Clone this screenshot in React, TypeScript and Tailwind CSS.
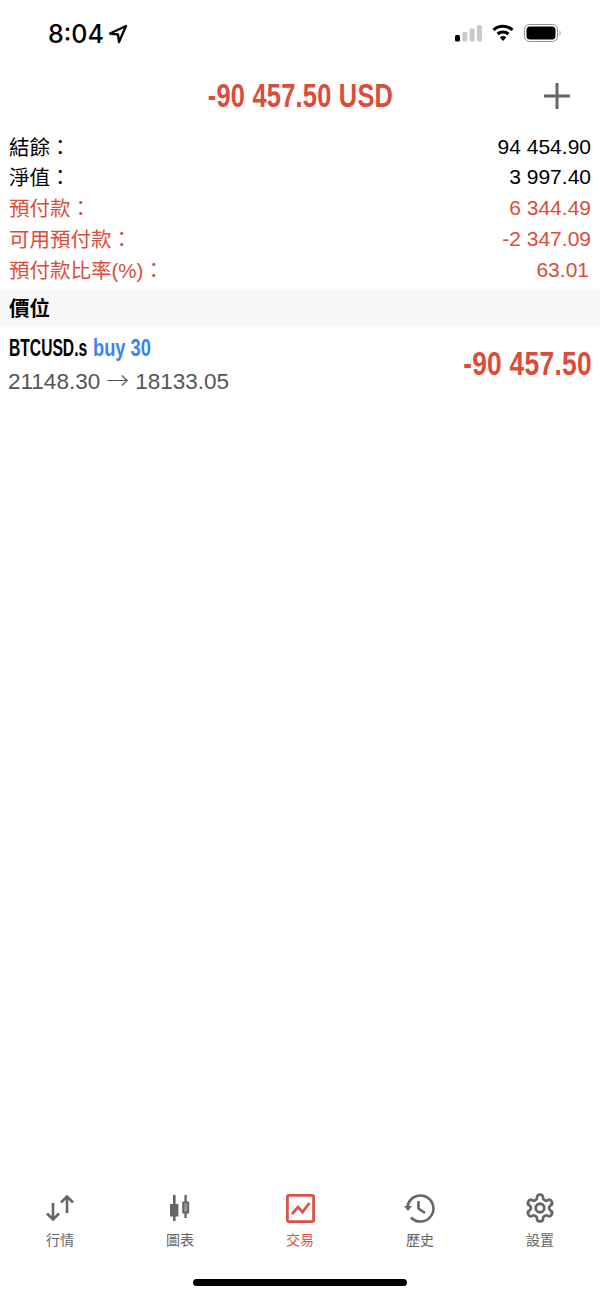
const sans = 'font-["Liberation_Sans","Noto_Sans_CJK_TC",sans-serif]';

const rows = [
  { label: '結餘：', value: '94 454.90', red: false },
  { label: '淨值：', value: '3 997.40', red: false },
  { label: '預付款：', value: '6 344.49', red: true },
  { label: '可用預付款：', value: '-2 347.09', red: true },
  { label: '預付款比率(%)：', value: '63.01', red: true },
];

function StatusBar() {
  return (
    <div className="h-[66px] flex items-start justify-between pt-[19px] pl-[48px] pr-[38px]">
      <div className="flex items-center gap-[4px]">
        <span className='font-["Inter",sans-serif] text-[25px] leading-[30px] font-medium text-black'>8:04</span>
        <svg width="20" height="20" viewBox="0 0 20 20" fill="none" stroke="black" strokeWidth="2.3" strokeLinejoin="round">
          <path d="M18 2 L2 9.5 L10 10.5 L11 18 Z" />
        </svg>
      </div>
      <div className="flex items-center gap-[10px] pt-[5px]">
        <svg width="27" height="18" viewBox="0 0 27 18">
          <rect x="0" y="11" width="5" height="6.5" rx="1.5" fill="black" />
          <rect x="7.3" y="8" width="5" height="9.5" rx="1.5" fill="#c9c9c9" />
          <rect x="14.6" y="4.5" width="5" height="13" rx="1.5" fill="#c9c9c9" />
          <rect x="21.9" y="1" width="5" height="16.5" rx="1.5" fill="#c9c9c9" />
        </svg>
        <svg width="22" height="18" viewBox="0 0 22 18" fill="none" stroke="black" strokeWidth="3">
          <path d="M1.5 6 A14 14 0 0 1 20.5 6" />
          <path d="M5.5 10 A8.5 8.5 0 0 1 16.5 10" />
          <path d="M11 17 L7.8 13.4 A5 5 0 0 1 14.2 13.4 Z" fill="black" stroke="none" />
        </svg>
        <svg width="38" height="18" viewBox="0 0 38 18">
          <rect x="0.5" y="0.5" width="33" height="17" rx="5" fill="none" stroke="#8e8e8e" />
          <rect x="2.5" y="2.5" width="29" height="13" rx="3.5" fill="black" />
          <path d="M35.5 6.5 C37 7 37 11 35.5 11.5 Z" fill="#9a9a9a" />
        </svg>
      </div>
    </div>
  );
}

function TabItem({ label, active, children }: { label: string; active?: boolean; children: React.ReactNode }) {
  return (
    <div className={`flex flex-col items-center ${active ? 'text-[#d9534a]' : 'text-[#666666]'}`}>
      <div className="h-[32px] flex items-center justify-center">{children}</div>
      <span className="text-[14px] leading-[16px] mt-[8px]">{label}</span>
    </div>
  );
}

export default function App() {
  return (
    <div className={`relative w-[600px] h-[1298px] bg-white flex flex-col overflow-hidden ${sans}`}>
      <StatusBar />

      <div className="relative h-[60px] flex items-center justify-center">
        <span className="text-[33px] leading-[40px] font-bold tracking-[0.3px] text-[#dc4c3a] inline-block scale-x-[0.77] whitespace-nowrap">-90 457.50 USD</span>
        <svg className="absolute left-[544px] top-[17px]" width="26" height="26" viewBox="0 0 26 26" stroke="#666666" strokeWidth="3">
          <path d="M13 0 V26 M0 13 H26" />
        </svg>
      </div>

      <div className="flex flex-col pl-[9px] pr-[9px] pt-[5px]">
        {rows.map((row, i) => (
          <div
            key={row.label}
            className={`h-[30.75px] flex items-center justify-between text-[21px] ${row.red ? 'text-[#dc4c3a]' : 'text-black'}`}
          >
            <span className="text-[20.5px] mt-[3px]">{row.label}</span>
            <span className={i === 4 ? 'pr-[2px]' : ''}>{row.value}</span>
          </div>
        ))}
      </div>

      <div className="h-[36px] mt-[5.25px] bg-[#f7f7f7] flex items-center pl-[9px] pt-[2px] text-[20.5px] font-bold text-black">價位</div>

      <div className="h-[74px] flex items-center justify-between pl-[8px] pr-[8px]">
        <div className="flex flex-col">
          <div className="h-[34px] pl-[1px] pt-[1px] flex items-center font-bold whitespace-nowrap">
            <span className="w-[84px] text-[23px] text-black origin-left scale-x-[0.68]">BTCUSD.s</span>
            <span className="text-[24px] text-[#3b82f6] origin-left scale-x-[0.76]">buy 30</span>
          </div>
          <div className="text-[22.5px] leading-[28px] text-[#555555] whitespace-nowrap">
            21148.30 <span className='font-["Noto_Sans_CJK_TC"] font-light'>→</span> 18133.05
          </div>
        </div>
        <span className="mt-[2px] text-[33px] font-bold tracking-[0.3px] text-[#dc4c3a] origin-right scale-x-[0.8] whitespace-nowrap">-90 457.50</span>
      </div>

      <div className="flex-1" />

      <div className="grid grid-cols-5 pb-[50px]">
        <TabItem label="行情">
          <svg width="28" height="26" viewBox="0 0 28 26" fill="none" stroke="currentColor" strokeWidth="2.6">
            <path d="M7 8 V24.5 M1 18.5 L7 24.5 L13 18.5" />
            <path d="M21 18 V1.5 M15 7.5 L21 1.5 L27 7.5" />
          </svg>
        </TabItem>
        <TabItem label="圖表">
          <svg width="20" height="26" viewBox="0 0 20 26" fill="currentColor">
            <rect x="3" y="0" width="2.6" height="26" />
            <rect x="0" y="9" width="8.4" height="12.5" />
            <rect x="14.4" y="0" width="2.4" height="23" />
            <rect x="13.2" y="7.5" width="5" height="10" fill="#999999" stroke="currentColor" strokeWidth="2" />
          </svg>
        </TabItem>
        <TabItem active label="交易">
          <svg width="29" height="29" viewBox="0 0 29 29" fill="none" stroke="currentColor" strokeWidth="2.8">
            <rect x="1.4" y="1.4" width="26.2" height="26.2" rx="1.5" />
            <path d="M6 20 L12 13 L16.5 18 L23.5 9" />
          </svg>
        </TabItem>
        <TabItem label="歷史">
          <svg width="32" height="30" viewBox="0 0 32 30" fill="none" stroke="currentColor" strokeWidth="2.6">
            <path d="M3.5 14 A13 13 0 1 1 7 24.5" />
            <path d="M0 13 L8 13 L4 18 Z" fill="currentColor" stroke="none" />
            <path d="M14.5 8 V15.5 L21 20" />
          </svg>
        </TabItem>
        <TabItem label="設置">
          <svg width="32" height="32" viewBox="0 0 24 24" fill="none" stroke="currentColor" strokeWidth="2.1" strokeLinecap="round" strokeLinejoin="round">
            <path d="M12.22 2h-.44a2 2 0 0 0-2 2v.18a2 2 0 0 1-1 1.73l-.43.25a2 2 0 0 1-2 0l-.15-.08a2 2 0 0 0-2.73.73l-.22.38a2 2 0 0 0 .73 2.73l.15.1a2 2 0 0 1 1 1.72v.51a2 2 0 0 1-1 1.74l-.15.09a2 2 0 0 0-.73 2.73l.22.38a2 2 0 0 0 2.73.73l.15-.08a2 2 0 0 1 2 0l.43.25a2 2 0 0 1 1 1.73V20a2 2 0 0 0 2 2h.44a2 2 0 0 0 2-2v-.18a2 2 0 0 1 1-1.73l.43-.25a2 2 0 0 1 2 0l.15.08a2 2 0 0 0 2.73-.73l.22-.39a2 2 0 0 0-.73-2.73l-.15-.08a2 2 0 0 1-1-1.74v-.5a2 2 0 0 1 1-1.74l.15-.09a2 2 0 0 0 .73-2.73l-.22-.38a2 2 0 0 0-2.73-.73l-.15.08a2 2 0 0 1-2 0l-.43-.25a2 2 0 0 1-1-1.73V4a2 2 0 0 0-2-2z" />
            <circle cx="12" cy="12" r="3.2" />
          </svg>
        </TabItem>
      </div>

      <div className="absolute left-[193px] top-[1279px] w-[214px] h-[7px] rounded-full bg-black" />
    </div>
  );
}
